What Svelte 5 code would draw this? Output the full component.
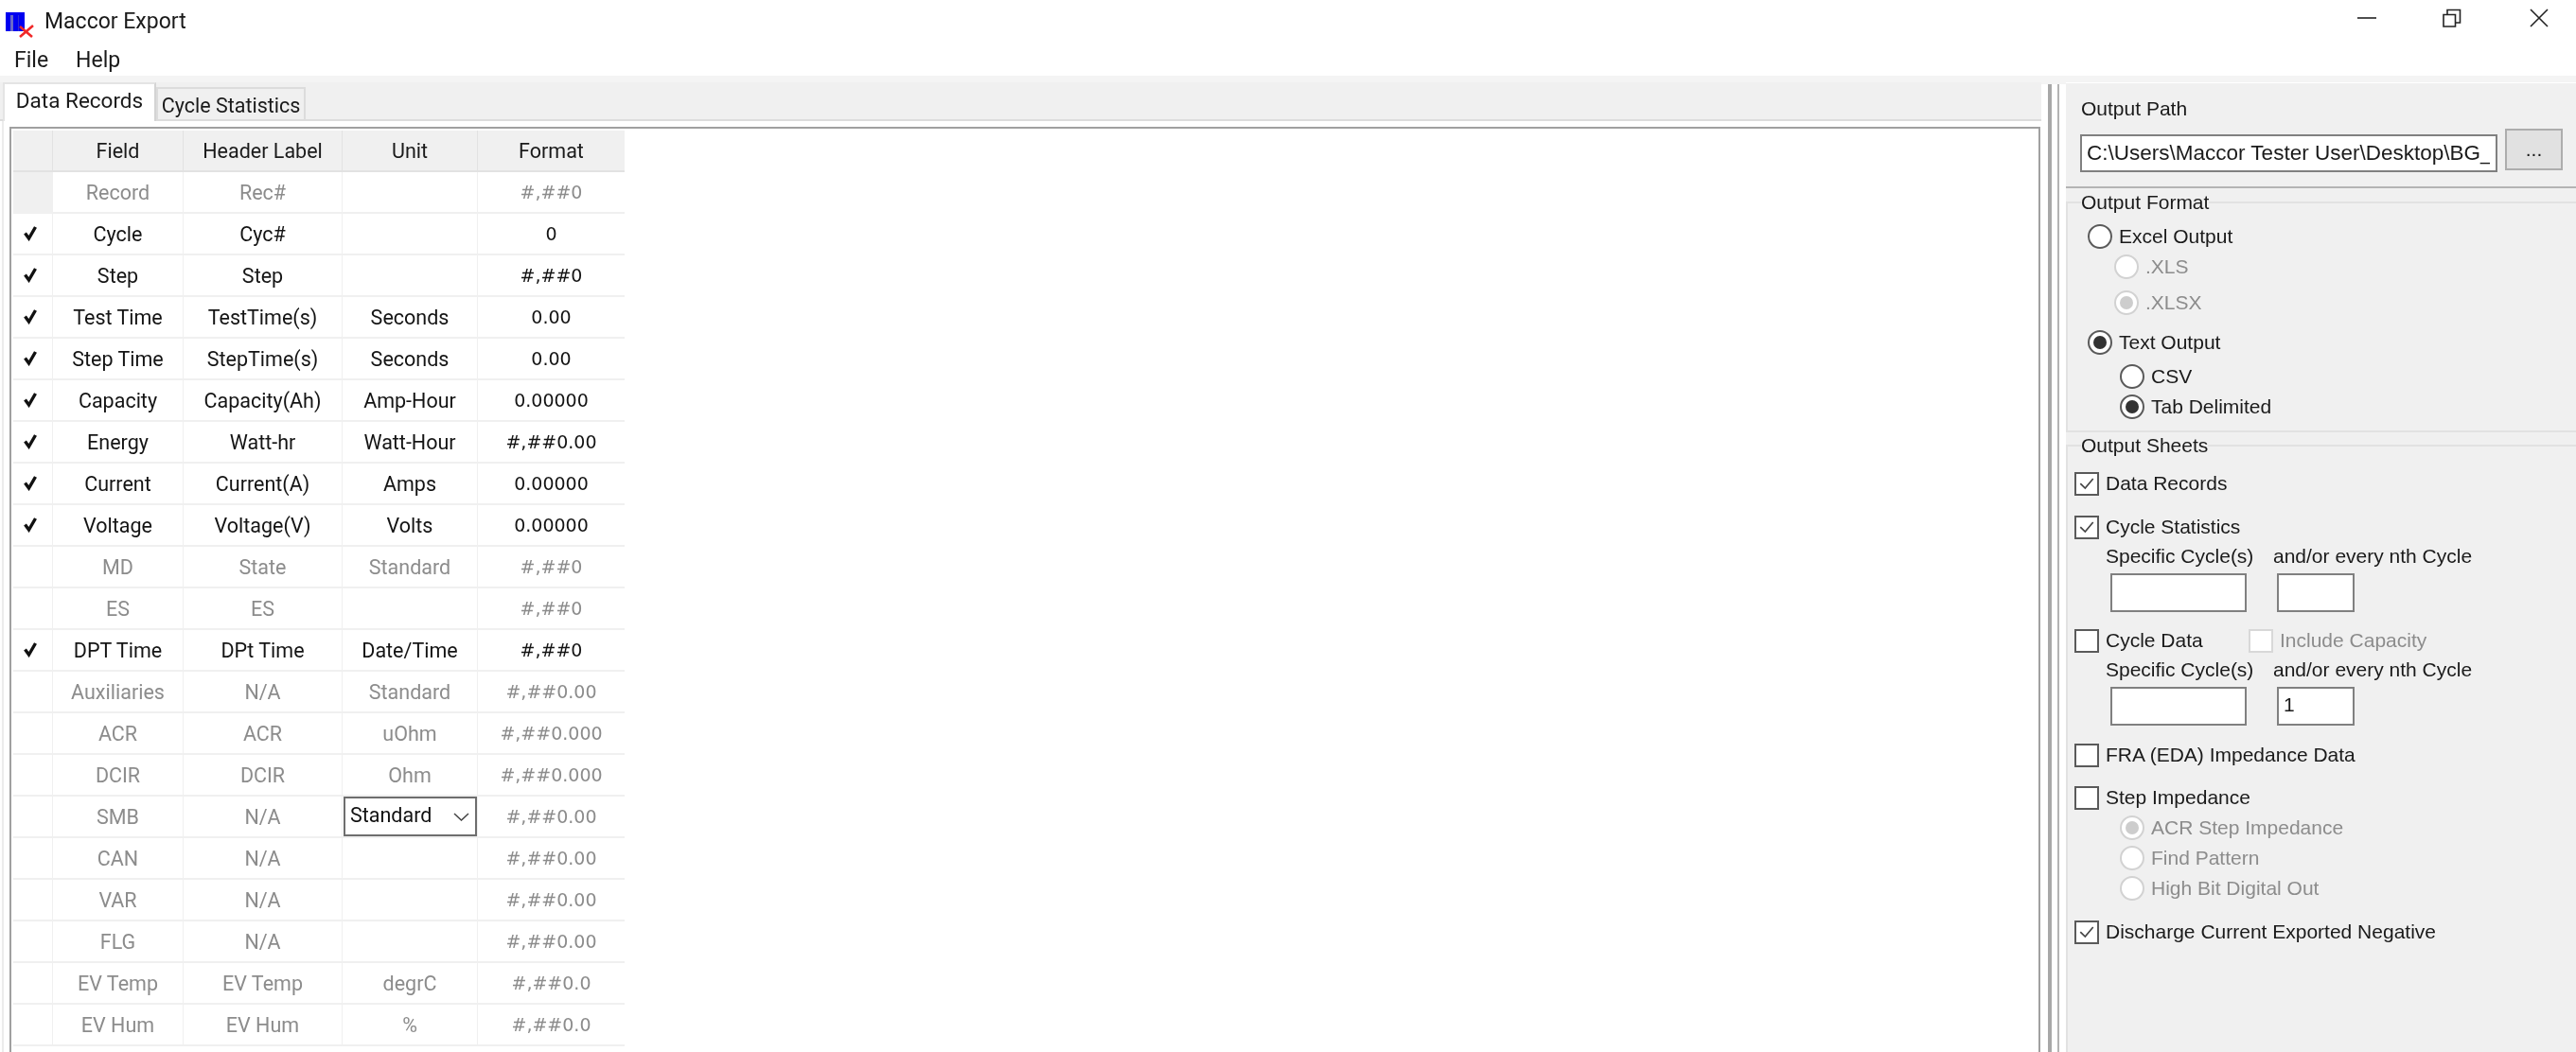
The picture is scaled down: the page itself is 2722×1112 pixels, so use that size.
<script lang="ts">
type Row = { field: string; label: string; unit: string; format: string; on?: boolean; locked?: boolean; combo?: boolean };

const rows: Row[] = [
  { field: 'Record', label: 'Rec#', unit: '', format: '#,##0', locked: true },
  { field: 'Cycle', label: 'Cyc#', unit: '', format: '0', on: true },
  { field: 'Step', label: 'Step', unit: '', format: '#,##0', on: true },
  { field: 'Test Time', label: 'TestTime(s)', unit: 'Seconds', format: '0.00', on: true },
  { field: 'Step Time', label: 'StepTime(s)', unit: 'Seconds', format: '0.00', on: true },
  { field: 'Capacity', label: 'Capacity(Ah)', unit: 'Amp-Hour', format: '0.00000', on: true },
  { field: 'Energy', label: 'Watt-hr', unit: 'Watt-Hour', format: '#,##0.00', on: true },
  { field: 'Current', label: 'Current(A)', unit: 'Amps', format: '0.00000', on: true },
  { field: 'Voltage', label: 'Voltage(V)', unit: 'Volts', format: '0.00000', on: true },
  { field: 'MD', label: 'State', unit: 'Standard', format: '#,##0' },
  { field: 'ES', label: 'ES', unit: '', format: '#,##0' },
  { field: 'DPT Time', label: 'DPt Time', unit: 'Date/Time', format: '#,##0', on: true },
  { field: 'Auxiliaries', label: 'N/A', unit: 'Standard', format: '#,##0.00' },
  { field: 'ACR', label: 'ACR', unit: 'uOhm', format: '#,##0.000' },
  { field: 'DCIR', label: 'DCIR', unit: 'Ohm', format: '#,##0.000' },
  { field: 'SMB', label: 'N/A', unit: 'Standard', format: '#,##0.00', combo: true },
  { field: 'CAN', label: 'N/A', unit: '', format: '#,##0.00' },
  { field: 'VAR', label: 'N/A', unit: '', format: '#,##0.00' },
  { field: 'FLG', label: 'N/A', unit: '', format: '#,##0.00' },
  { field: 'EV Temp', label: 'EV Temp', unit: 'degrC', format: '#,##0.0' },
  { field: 'EV Hum', label: 'EV Hum', unit: '%', format: '#,##0.0' },
];
</script>

{#snippet tick()}
  <svg class="tick" viewBox="0 0 26 25"><polyline points="5,12 11,18 21,6" /></svg>
{/snippet}

{#snippet box(checked: boolean, off = false)}
  <span class="box" class:off>{#if checked}{@render tick()}{/if}</span>
{/snippet}

{#snippet radio(text: string, kind: string, checked = false, off = false)}
  <div class="radio {kind}" class:off>
    <span class="dot" class:checked></span>
    <span>{text}</span>
  </div>
{/snippet}

<div class="window">
  <header class="titlebar">
    <svg class="appicon" viewBox="0 0 30 27">
      <rect x="0" y="0" width="20" height="20" fill="#0000f0" />
      <rect x="5" y="3" width="3" height="17" fill="#6a6ac8" />
      <rect x="13" y="3" width="1" height="17" fill="#2a2ad8" />
      <path d="M15 15 L28 26 M29 14 L15 26" stroke="#f02828" stroke-width="2.6" fill="none" />
    </svg>
    <span class="title">Maccor Export</span>
    <div class="controls">
      <svg viewBox="0 0 20 20" class="min"><path d="M0 10H20" /></svg>
      <svg viewBox="0 0 20 20" class="max"><path d="M1 6.5H13.5V19H1Z M5 6V1.5H18.5V15H14" /></svg>
      <svg viewBox="0 0 20 20" class="close"><path d="M1 1L19 19M19 1L1 19" /></svg>
    </div>
  </header>
  <nav class="menu"><span>File</span><span>Help</span></nav>
  <div class="rule"></div>

  <div class="main">
    <section class="left">
      <div class="tabs">
        <div class="tab active">Data Records</div>
        <div class="tab">Cycle Statistics</div>
      </div>
      <div class="panel">
        <div class="grid">
          <table>
            <colgroup>
              <col class="c0" /><col class="c1" /><col class="c2" /><col class="c3" /><col class="c4" />
            </colgroup>
            <thead>
              <tr><th></th><th>Field</th><th>Header Label</th><th>Unit</th><th>Format</th></tr>
            </thead>
            <tbody>
              {#each rows as row}
                <tr class:on={row.on}>
                  <td class="mark" class:locked={row.locked}>
                    {#if row.on}
                      <svg viewBox="0 0 14 17"><polyline points="1.5,8.5 5.5,14 12.5,2" /></svg>
                    {/if}
                  </td>
                  <td>{row.field}</td>
                  <td>{row.label}</td>
                  <td class="unit">
                    {#if row.combo}
                      <div class="combo">
                        <span>{row.unit}</span>
                        <svg viewBox="0 0 17 9"><polyline points="1,1 8.5,8 16,1" /></svg>
                      </div>
                    {:else}
                      {row.unit}
                    {/if}
                  </td>
                  <td class="fmt">{row.format}</td>
                </tr>
              {/each}
            </tbody>
          </table>
        </div>
      </div>
    </section>

    <div class="splitter"><i></i><i></i></div>

    <aside class="right">
      <div class="pathsec">
        <div class="pathlabel">Output Path</div>
        <div class="pathrow">
          <div class="pathinput"><div>C:\Users\Maccor Tester User\Desktop\BG_T</div></div>
          <div class="browse">...</div>
        </div>
      </div>

      <fieldset class="format">
        <legend>Output Format</legend>
        {@render radio('Excel Output', 'top')}
        {@render radio('.XLS', 'xls', false, true)}
        {@render radio('.XLSX', 'xls xlsx', true, true)}
        {@render radio('Text Output', 'top textout', true)}
        {@render radio('CSV', 'csv first')}
        {@render radio('Tab Delimited', 'csv', true)}
      </fieldset>

      <fieldset class="sheets">
        <legend>Output Sheets</legend>
        <div class="check">{@render box(true)}<span>Data Records</span></div>
        <div class="check mt20">{@render box(true)}<span>Cycle Statistics</span></div>
        <div class="cyc">
          <span>Specific Cycle(s)</span><span>and/or every nth Cycle</span>
          <div class="field wide"></div><div class="field narrow"></div>
        </div>
        <div class="check mt17">
          <div class="half">{@render box(false)}<span>Cycle Data</span></div>
          <div class="capacity off">{@render box(false, true)}<span>Include Capacity</span></div>
        </div>
        <div class="cyc">
          <span>Specific Cycle(s)</span><span>and/or every nth Cycle</span>
          <div class="field wide"></div><div class="field narrow">1</div>
        </div>
        <div class="check mt18">{@render box(false)}<span>FRA (EDA) Impedance Data</span></div>
        <div class="check mt19">{@render box(false)}<span>Step Impedance</span></div>
        <div class="impgroup">
          {@render radio('ACR Step Impedance', 'imp', true, true)}
          {@render radio('Find Pattern', 'imp', false, true)}
          {@render radio('High Bit Digital Out', 'imp', false, true)}
        </div>
        <div class="check mt17">{@render box(true)}<span>Discharge Current Exported Negative</span></div>
      </fieldset>
    </aside>
  </div>
</div>

<style>
:global(body) {
  margin: 0;
  background: #fff;
}
.window {
  width: 2722px;
  height: 1112px;
  display: flex;
  flex-direction: column;
  overflow: hidden;
  background: #fff;
  color: #1a1a1a;
  font-family: "Liberation Sans", Arial, sans-serif;
  font-size: 21px;
  filter: blur(0.6px);
}

/* title + menu */
.titlebar {
  height: 44px;
  display: flex;
  align-items: center;
  flex: none;
}
.appicon {
  width: 30px;
  height: 27px;
  margin: 9px 0 0 6px;
}
.title {
  margin-left: 11px;
  font-family: Roboto, sans-serif;
  font-size: 23px;
}
.controls {
  margin-left: auto;
  display: flex;
  align-items: center;
}
.controls svg {
  width: 20px;
  height: 20px;
  fill: none;
  stroke: #222;
  stroke-width: 1.6;
  margin-top: -7px;
}
.min { margin-right: 70px; }
.max { margin-right: 72px; }
.close { margin-right: 29px; }
.menu {
  height: 36px;
  flex: none;
  box-sizing: border-box;
  padding: 3px 0 0 15px;
  display: flex;
  gap: 29px;
  align-items: center;
  font-family: Roboto, sans-serif;
  font-size: 23px;
}
.rule {
  height: 7px;
  flex: none;
  background: #f4f4f4;
}

.main {
  flex: 1;
  min-height: 0;
  display: flex;
}

/* left side */
.left {
  width: 2157px;
  flex: none;
  display: flex;
  flex-direction: column;
  font-family: Roboto, sans-serif;
  font-size: 21.5px;
}
.tabs {
  height: 41px;
  flex: none;
  display: flex;
  align-items: flex-end;
  background: #f0f0f0;
  border-bottom: 2px solid #dcdcdc;
  box-sizing: border-box;
  padding-left: 3px;
}
.tab {
  height: 36px;
  width: 158px;
  box-sizing: border-box;
  display: flex;
  align-items: center;
  justify-content: center;
  white-space: nowrap;
  border: 2px solid #dcdcdc;
  border-bottom: none;
  margin-bottom: -2px;
}
.tab.active {
  height: 41px;
  width: 162px;
  background: #fff;
  padding-bottom: 5px;
  border-color: #e4e4e4;
  border-right-color: #d4d4d4;
  font-size: 22.5px;
}
.panel {
  flex: 1;
  min-height: 0;
  background: #fff;
  border-left: 2px solid #ececec;
  margin-left: 2px;
  padding: 6px 0 0 6px;
}
.grid {
  height: 100%;
  box-sizing: border-box;
  border: 2px solid #a0a0a0;
  border-bottom: none;
  margin-right: 1px;
  padding: 2px 0 0 2px;
}
table {
  border-collapse: separate;
  border-spacing: 0;
  table-layout: fixed;
  width: 646px;
  color: #8c8c8c;
}
.c0 { width: 42px; }
.c1 { width: 138px; }
.c2 { width: 168px; }
.c3 { width: 143px; }
.c4 { width: 155px; }
th {
  height: 44px;
  box-sizing: border-box;
  padding: 0;
  background: #f0f0f0;
  color: #1a1a1a;
  font-weight: 400;
  border-right: 1px solid #e2e2e2;
  border-bottom: 2px solid #e2e2e2;
}
th:last-child { border-right: none; }
td {
  height: 44px;
  box-sizing: border-box;
  padding: 0;
  text-align: center;
  white-space: nowrap;
  border-right: 1px solid #f0f0f0;
  border-bottom: 2px solid #f0f0f0;
}
td:last-child { border-right: none; }
tr.on { color: #141414; }
.fmt { font-family: "DejaVu Sans", sans-serif; font-size: 19px; }
.mark svg {
  width: 14px;
  height: 17px;
  display: block;
  margin: 0 auto 2px;
  transform: translateX(-3px);
  fill: none;
  stroke: #111;
  stroke-width: 3.4;
}
.mark.locked { background: #f0f0f0; }
.unit { position: relative; }
.combo {
  position: absolute;
  left: 1px;
  top: 0;
  width: 141px;
  height: 42px;
  box-sizing: border-box;
  background: #fff;
  border: 2px solid #6e6e6e;
  display: flex;
  align-items: center;
  justify-content: space-between;
  padding: 0 6px 3px 5px;
  color: #111;
}
.combo svg {
  width: 17px;
  height: 9px;
  fill: none;
  stroke: #444;
  stroke-width: 1.5;
  margin-top: 3px;
}

/* splitter */
.splitter {
  width: 26px;
  flex: none;
  background: #fff;
  display: flex;
  gap: 6px;
  padding-left: 7px;
  box-sizing: border-box;
  border-top: 2px solid #f4f4f4;
}
.splitter i {
  display: block;
  width: 4px;
  background: #a8a8a8;
}
.splitter i + i {
  width: 2px;
  background: #b4b4b4;
}

/* right side */
.right {
  flex: 1;
  min-width: 0;
  display: flex;
  flex-direction: column;
  background: #f0f0f0;
  margin-top: 1px;
}
.pathsec {
  height: 111px;
  flex: none;
  box-sizing: border-box;
  border-bottom: 2px solid #b4b4b4;
  padding: 15px 0 0 15px;
}
.pathlabel {
  line-height: 24px;
  padding-left: 1px;
}
.pathrow {
  display: flex;
  align-items: flex-start;
  gap: 8px;
  margin-top: 9px;
}
.pathinput {
  width: 441px;
  height: 40px;
  margin-top: 6px;
  box-sizing: border-box;
  background: #fff;
  border: 2px solid #808080;
  padding: 0 6px 0 5px;
  line-height: 36px;
  font-size: 22.5px;
}
.pathinput div {
  overflow: hidden;
  white-space: nowrap;
}
.browse {
  width: 61px;
  height: 44px;
  box-sizing: border-box;
  background: #e1e1e1;
  border: 2px solid #adadad;
  text-align: center;
  line-height: 40px;
}
fieldset {
  margin: 0 -4px 0 0;
  padding: 0;
  min-width: 0;
  border: 2px solid #e2e2e2;
  border-right: none;
}
legend {
  padding: 0;
  line-height: 24px;
}
.format {
  height: 255px;
  flex: none;
  box-sizing: border-box;
  padding: 8px 0 0 21px;
  margin-top: 3px;
}
.format legend { margin-left: -7px; }
.sheets {
  flex: 1;
  min-height: 0;
  border-bottom: none;
  padding: 15px 0 0 7px;
  margin-top: 2px;
}
.sheets legend { margin-left: 7px; }
.radio {
  display: flex;
  align-items: center;
  height: 32px;
  gap: 7px;
}
.dot {
  width: 26px;
  height: 26px;
  box-sizing: border-box;
  flex: none;
  border-radius: 50%;
  background: #fff;
  border: 2px solid #5a5a5a;
  display: flex;
  align-items: center;
  justify-content: center;
}
.dot.checked::after {
  content: "";
  width: 14px;
  height: 14px;
  border-radius: 50%;
  background: #333;
}
.off { color: #8c8c8c; }
.off .dot { border-color: #d2d2d2; }
.off .dot.checked::after { background: #cdcdcd; }
.xls { margin-left: 28px; }
.xlsx { margin-top: 6px; }
.textout { margin-top: 10px; }
.csv { margin-left: 34px; }
.csv.first { margin-top: 4px; }
.impgroup { margin-top: 3px; }
.imp { margin-left: 48px; }
.check {
  display: flex;
  align-items: center;
  height: 26px;
  gap: 7px;
}
.half {
  display: flex;
  align-items: center;
  gap: 7px;
  width: 177px;
}
.capacity {
  display: flex;
  align-items: center;
  gap: 7px;
}
.box {
  width: 26px;
  height: 25px;
  flex: none;
  box-sizing: border-box;
  background: #fff;
  border: 2px solid #5a5a5a;
  display: flex;
}
.box.off { border-color: #d8d8d8; }
.tick {
  width: 100%;
  height: 100%;
  fill: none;
  stroke: #444;
  stroke-width: 2;
}
.mt17 { margin-top: 17px; }
.mt18 { margin-top: 18px; }
.mt19 { margin-top: 19px; }
.mt20 { margin-top: 20px; }
.cyc {
  display: grid;
  grid-template-columns: 177px auto;
  grid-template-rows: 24px 41px;
  row-gap: 6px;
  margin: 6px 0 0 33px;
}
.field {
  box-sizing: border-box;
  background: #fff;
  border: 2px solid #808080;
  height: 41px;
  padding-left: 5px;
  line-height: 33px;
}
.wide {
  width: 144px;
  margin-left: 5px;
}
.narrow {
  width: 82px;
  margin-left: 4px;
}
</style>
